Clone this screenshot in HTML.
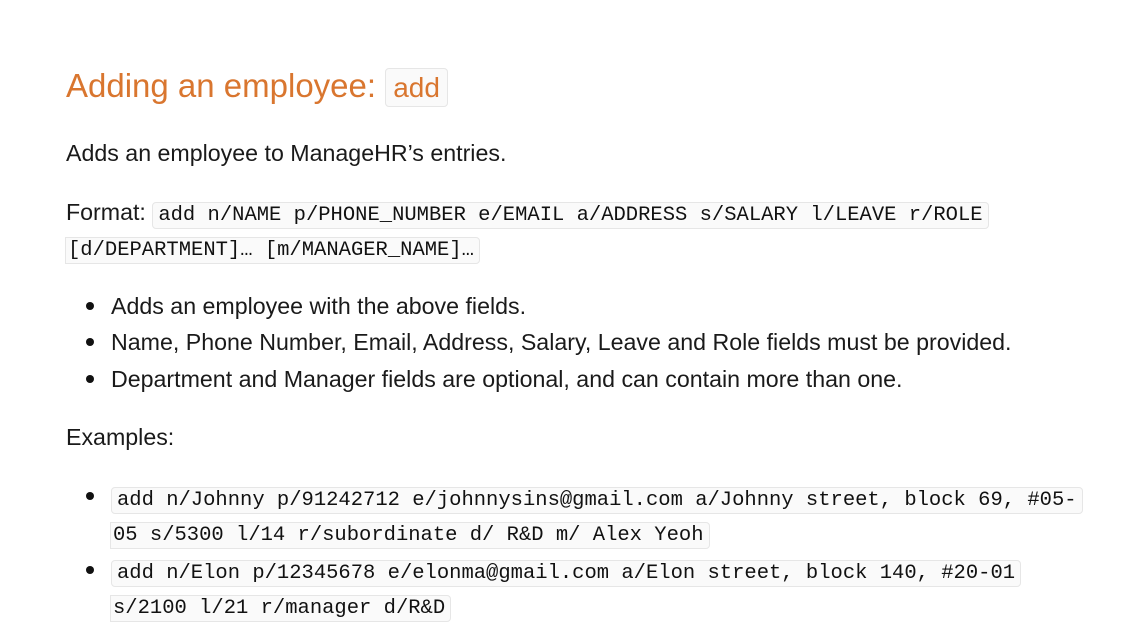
<!DOCTYPE html>
<html><head><meta charset="utf-8"><style>
body{margin:0;width:1126px;height:638px;background:#fff;overflow:hidden;position:relative;font-family:"Liberation Sans",sans-serif;color:#1a1a1a}
.l{position:absolute;white-space:nowrap;font-size:23.2px;line-height:30px}
code{font-family:"Liberation Mono",monospace;font-size:20.5px;background:#fafafa;border:1px solid #e6e6e6;border-radius:4px;padding:1px 5px;color:#111}
code.c{padding-left:2px;border-top-left-radius:0;border-bottom-left-radius:0}
.h{color:#d9762f;font-size:33px;line-height:40px}
.h code{color:#d9762f;font-size:28px;font-family:"Liberation Sans",sans-serif;padding:3px 7px}
.dot{position:absolute;width:8px;height:8px;border-radius:50%;background:#111}
</style></head><body>
<div class="l h" style="left:66px;top:66px">Adding an employee: <code>add</code></div>
<div class="l" style="left:66px;top:138px">Adds an employee to ManageHR’s entries.</div>
<div class="l" style="left:66px;top:197px">Format: <code>add n/NAME p/PHONE_NUMBER e/EMAIL a/ADDRESS s/SALARY l/LEAVE r/ROLE</code></div>
<div class="l" style="left:65px;top:232px"><code class="c">[d/DEPARTMENT]… [m/MANAGER_NAME]…</code></div>
<div class="dot" style="left:86px;top:302px"></div>
<div class="l" style="left:111px;top:291px">Adds an employee with the above fields.</div>
<div class="dot" style="left:86px;top:338px"></div>
<div class="l" style="left:111px;top:327px">Name, Phone Number, Email, Address, Salary, Leave and Role fields must be provided.</div>
<div class="dot" style="left:86px;top:375px"></div>
<div class="l" style="left:111px;top:364px">Department and Manager fields are optional, and can contain more than one.</div>
<div class="l" style="left:66px;top:422px">Examples:</div>
<div class="dot" style="left:86px;top:492px"></div>
<div class="l" style="left:111px;top:482px"><code>add n/Johnny p/91242712 e/johnnysins@gmail.com a/Johnny street, block 69, #05-</code></div>
<div class="l" style="left:110px;top:517px"><code class="c">05 s/5300 l/14 r/subordinate d/ R&amp;D m/ Alex Yeoh</code></div>
<div class="dot" style="left:86px;top:566px"></div>
<div class="l" style="left:111px;top:555px"><code>add n/Elon p/12345678 e/elonma@gmail.com a/Elon street, block 140, #20-01</code></div>
<div class="l" style="left:110px;top:590px"><code class="c">s/2100 l/21 r/manager d/R&amp;D</code></div>
</body></html>
